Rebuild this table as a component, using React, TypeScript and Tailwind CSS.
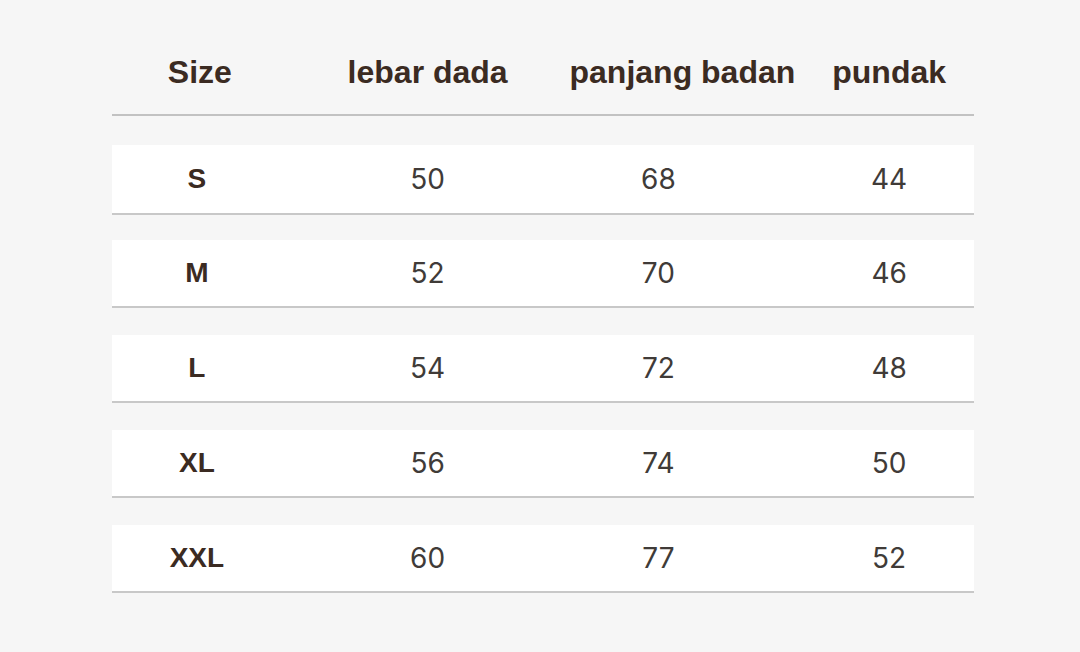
import React from "react";

const rows = [
  { size: "S", a: "50", b: "68", c: "44", h: "h-[70px]", mt: "mt-[29px]" },
  { size: "M", a: "52", b: "70", c: "46", h: "h-[68px]", mt: "mt-[25px]" },
  { size: "L", a: "54", b: "72", c: "48", h: "h-[68px]", mt: "mt-[27px]" },
  { size: "XL", a: "56", b: "74", c: "50", h: "h-[68px]", mt: "mt-[27px]" },
  { size: "XXL", a: "60", b: "77", c: "52", h: "h-[68px]", mt: "mt-[27px]" },
];

const bold = { fontFamily: '"Liberation Sans", Arial, sans-serif' };
const num = { fontFamily: 'Inter, "Liberation Sans", sans-serif' };

export default function App() {
  return (
    <div className="w-[1080px] h-[652px] bg-[#f6f6f6] overflow-hidden">
      <div className="ml-[112px] w-[862px]">
        <div className="h-[116px] border-b-2 border-[#c2c2c2]">
          <div
            className="grid grid-cols-4 gap-x-[61px] pt-[52px] text-[32px] leading-[40px] font-bold text-[#3b2b22]"
            style={bold}
          >
            <div className="text-center whitespace-nowrap pl-[6px]">Size</div>
            <div className="text-center whitespace-nowrap">lebar dada</div>
            <div className="text-center whitespace-nowrap -ml-[4px]">panjang badan</div>
            <div className="text-center whitespace-nowrap">pundak</div>
          </div>
        </div>
        {rows.map((r) => (
          <div
            key={r.size}
            className={`${r.mt} ${r.h} bg-white border-b-2 border-[#c8c8c8] grid grid-cols-4 gap-x-[61px] items-center`}
          >
            <div
              className="text-center text-[28px] font-bold text-[#3b2b22]"
              style={bold}
            >
              {r.size}
            </div>
            <div className="text-center text-[28px] text-[#403b38]" style={num}>
              {r.a}
            </div>
            <div className="text-center text-[28px] text-[#403b38]" style={num}>
              {r.b}
            </div>
            <div className="text-center text-[28px] text-[#403b38]" style={num}>
              {r.c}
            </div>
          </div>
        ))}
      </div>
    </div>
  );
}
